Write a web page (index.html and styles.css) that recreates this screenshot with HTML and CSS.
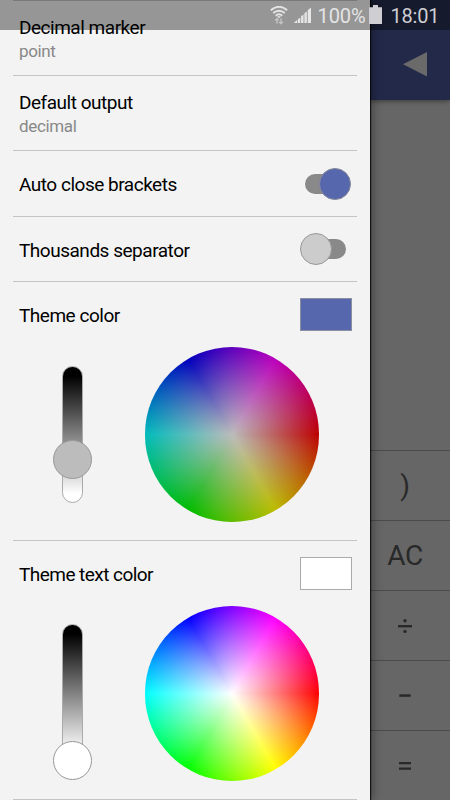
FILE: index.html
```html
<!DOCTYPE html>
<html lang="en">
<head>
<meta charset="utf-8">
<title>Calculator settings</title>
<link rel="stylesheet" href="styles.css">
</head>
<body>
<div class="screen">
  <main class="calculator">
    <header class="toolbar">
      <svg width="24" height="25" viewBox="0 0 24 25"><path d="M0 12.2 24 0v24.5z" fill="#6a6a6a"/></svg>
    </header>
    <div class="display"></div>
    <div class="keys">
      <div class="key">)</div>
      <div class="key">AC</div>
      <div class="key"><svg width="14" height="16" viewBox="0 0 14 16" fill="#292929"><path d="M0 7h14v2.4H0z"/><circle cx="7" cy="2.7" r="1.7"/><circle cx="7" cy="13.4" r="1.7"/></svg></div>
      <div class="key"><svg width="12" height="16" viewBox="0 0 12 16" fill="#292929"><path d="M.3 6.3h11.4v2.5H.3z"/></svg></div>
      <div class="key"><svg width="12" height="16" viewBox="0 0 12 16" fill="#292929"><path d="M0 4h12v2.3H0zM0 9.5h12v2.3H0z"/></svg></div>
    </div>
  </main>
  <aside class="drawer">
    <section class="row double"><div class="title">Decimal marker</div><div class="sub">point</div></section>
    <section class="row double"><div class="title">Default output</div><div class="sub">decimal</div></section>
    <section class="row single"><div class="title">Auto close brackets</div><div class="switch on"><div class="track"></div><div class="thumb"></div></div></section>
    <section class="row single second"><div class="title">Thousands separator</div><div class="switch"><div class="track"></div><div class="thumb"></div></div></section>
    <section class="row picker">
      <div class="heading"><div class="title">Theme color</div><div class="swatch blue"></div></div>
      <div class="controls"><div class="slider"><div class="knob grey"></div></div><div class="wheel dim"></div></div>
    </section>
    <section class="row picker text-picker">
      <div class="heading"><div class="title">Theme text color</div><div class="swatch"></div></div>
      <div class="controls"><div class="slider"><div class="knob white"></div></div><div class="wheel"></div></div>
    </section>
    <div class="row end"></div>
  </aside>
  <div class="status">
    <svg class="wifi" width="18" height="20" viewBox="0 0 18 20" fill="none" stroke="#e4e4e4" stroke-width="1.9">
      <path d="M.8 4.2Q9-2.6 17.2 4.2M3.2 7.1Q9 2.3 14.8 7.1M5.7 9.8Q9 6.9 12.3 9.8"/>
      <path d="M7 10.2h4L9 12.2z" fill="#e4e4e4" stroke="none"/>
      <path d="M7 17.7v-5M5.2 14.5 7 12.4l1.8 2M11 12.2v5M9.2 15.7l1.8 2 1.8-2" stroke="#c4c4c4" stroke-width="1.3"/>
    </svg>
    <svg class="signal" width="18" height="17" viewBox="0 0 18 17" fill="#e6e6e6"><path d="M.2 15.5 3.2 13V16H.2zM3.9 12.3l2.4-1.8V16H3.9zM7.1 9.2l2.4-1.8V16H7.1zM10.4 6.3l2.4-1.8V16h-2.4zM13.7 3.3 17 .4V16h-3.3z"/></svg>
    <span class="percent">100%</span>
    <svg class="battery" width="13" height="20" viewBox="0 0 13 20"><path d="M4 0h5v2.2h4V19H0V2.2h4z" fill="#ceced3"/></svg>
    <span class="clock">18:01</span>
  </div>
</div>
</body>
</html>
```

FILE: styles.css
```css
* { box-sizing: border-box; }
body { margin: 0; font-family: Roboto, sans-serif; }
svg { display: block; }
.screen { position: relative; width: 450px; height: 800px; overflow: hidden; background: #666; }

.calculator { display: flex; flex-direction: column; height: 800px; padding-left: 370px; }
.toolbar { height: 100px; padding: 52px 0 0 33px; background: #232a49; box-shadow: 0 1px 5px rgba(0,0,0,.45); }
.display { height: 350px; }
.keys { display: grid; grid-template-rows: repeat(5, 70px); }
.key { display: flex; align-items: center; justify-content: center; padding-right: 10px; border-top: 1px solid #4b4b4b; color: #292929; font-size: 28px; letter-spacing: -.4px; }

.drawer { position: absolute; left: 0; top: 0; width: 370px; height: 800px; padding: 0 13px; background: #f3f3f3; box-shadow: 1px 0 1px rgba(0,0,0,.75), 2px 0 10px rgba(0,0,0,.4); }
.row { border-top: 1px solid #c4c4c4; padding: 0 6px; }
.double { height: 75px; padding-top: 15px; }
.title { font-size: 19px; line-height: 24px; letter-spacing: -.48px; color: #000; white-space: nowrap; }
.single .title, .heading .title { padding-top: 2px; }
.second .title { padding-top: 4px; }
.text-picker .title { letter-spacing: -.54px; }
.sub { font-size: 17px; line-height: 22px; letter-spacing: -.35px; color: #888; }
.single { height: 66px; display: flex; align-items: center; justify-content: space-between; }
.second { height: 65px; }
.switch { position: relative; width: 51px; height: 32px; padding: 6px 0 0 5px; }
.track { width: 41px; height: 20px; border-radius: 10px; background: #898989; }
.thumb { position: absolute; left: 0; top: 0; width: 32px; height: 32px; border: 1px solid #999; border-radius: 50%; background: #ccc; }
.on .thumb { left: 19px; background: #5767ad; border-color: #858998; }

.picker { height: 259px; }
.heading { display: flex; justify-content: space-between; align-items: center; height: 66px; }
.swatch { width: 52px; height: 33px; margin: -1px -1px 0 0; border: 1px solid #aaa; background: #fff; }
.blue { background: #5767ad; border-color: #8b8fa0; }
.controls { display: flex; padding-left: 43px; }
.slider { position: relative; width: 20.5px; height: 137px; margin: 18px 62px 0 0; border: 1px solid #aaa; border-radius: 11px; background: linear-gradient(#000 7%, #fff 93%); background-origin: border-box; }
.text-picker .slider { margin-top: 17px; }
.knob { position: absolute; left: -10.5px; width: 39px; height: 39px; border: 1px solid #999; border-radius: 50%; }
.grey { top: 73px; background: #bcbcbc; }
.white { top: 116px; background: #fff; }
.wheel { width: 174.5px; height: 174.5px; margin-top: -1px; border-radius: 50%; background: radial-gradient(circle closest-side, #fff, rgba(255,255,255,0)), conic-gradient(from 90deg, #f00, #ff0, #0f0, #0ff, #00f, #f0f, #f00); }
.dim { background: radial-gradient(circle closest-side, #bcbcbc, rgba(188,188,188,0)), conic-gradient(from 90deg, #bc0000, #bcbc00, #00bc00, #00bcbc, #0000bc, #bc00bc, #bc0000); }
.end { height: 1px; }

.status { position: absolute; left: 0; top: 0; width: 450px; height: 30px; display: flex; align-items: flex-start; padding-left: 270px; background: rgba(0,0,0,.38); color: #e4e4e4; font-size: 20px; line-height: 24px; white-space: nowrap; }
.wifi { margin-top: 6px; }
.signal { margin: 7px 0 0 6px; }
.percent { width: 51px; margin: 4px 0 0 5.5px; letter-spacing: -.1px; }
.battery { margin: 5px 0 0 .5px; }
.clock { margin: 4px 0 0 8.5px; letter-spacing: -.2px; color: #ceced3; }
```
